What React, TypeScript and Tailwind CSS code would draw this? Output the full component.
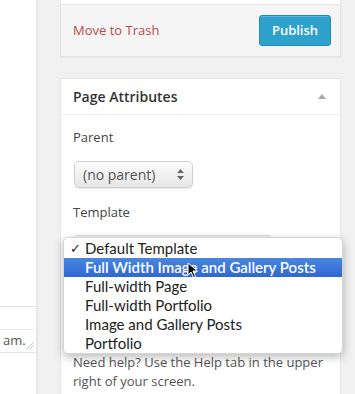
import React from "react";

const items = [
  "Default Template",
  "Full Width Image and Gallery Posts",
  "Full-width Page",
  "Full-width Portfolio",
  "Image and Gallery Posts",
  "Portfolio",
];

export default function App() {
  return (
    <div
      className="relative w-[355px] h-[394px] overflow-hidden flex bg-[#f1f1f1]"
      style={{ fontFamily: '"Open Sans", "Noto Sans", sans-serif' }}
    >
      {/* left column */}
      <div className="w-[38px] shrink-0 bg-white border-r-2 border-[#e6e6e6] flex flex-col">
        <div className="h-[307px] border-b border-[#e2e2e2]" />
        <div className="h-[23px] border-b border-[#eaeaea]" />
        <div className="relative h-[23px] border-b border-[#e2e2e2] flex items-center pl-[3px] text-[13px] text-[#555]">
          am.
          <svg className="absolute right-[2px] bottom-[3px]" width="7" height="7" viewBox="0 0 7 7">
            <path d="M7 0 L0 7 M7 3 L3 7" stroke="#c8c8c8" strokeWidth="1" />
          </svg>
        </div>
      </div>

      {/* main column */}
      <div className="flex-1 pl-[22px] pr-[14px] flex flex-col">
        {/* publish box */}
        <div className="border border-t-0 border-[#e3e3e3] bg-white shadow-[0_1px_1px_rgba(0,0,0,0.04)]">
          <div className="h-[5px] border-b border-[#e6e6e6]" />
          <div className="h-[51px] bg-[#f5f5f5] flex items-center justify-between pl-[12px] pr-[9px]">
            <span className="text-[13px] text-[#b84a4a]">Move to Trash</span>
            <button className="h-[31px] w-[72px] rounded-[3px] bg-[#2ea2cc] border border-[#1e8cbe] text-white text-[13px] font-semibold shadow-[inset_0_1px_0_rgba(120,200,230,0.5)]">
              Publish
            </button>
          </div>
        </div>

        {/* page attributes box */}
        <div className="mt-[21px] flex-1 bg-white border border-b-0 border-[#e5e5e5]">
          <div className="h-[36px] border-b border-[#eeeeee] flex items-center justify-between pl-[12px] pr-[14px]">
            <span className="text-[14px] font-semibold text-[#333]">Page Attributes</span>
            <svg width="8" height="5" viewBox="0 0 8 5">
              <path d="M4 0 L8 5 L0 5 Z" fill="#aaaaaa" />
            </svg>
          </div>
          <div className="pl-[12px] pr-[12px] flex flex-col">
            <p className="mt-[13px] text-[13px] text-[#444] leading-[18px]">Parent</p>
            <div className="mt-[15px] w-[119px] h-[27px] rounded-[5px] border border-[#cfcfcf] bg-gradient-to-b from-[#fdfdfd] to-[#e6e6e6] flex items-center pl-[8px] text-[14px] text-[#555] shadow-[0_1px_1px_rgba(0,0,0,0.08)] ml-[1px]">
              <span className="flex-1">(no parent)</span>
              <svg className="mr-[8px]" width="7" height="11" viewBox="0 0 7 11">
                <path d="M3.5 0 L7 4 L0 4 Z M3.5 11 L7 7 L0 7 Z" fill="#666" />
              </svg>
            </div>
            <p className="mt-[15px] text-[13px] text-[#444] leading-[18px]">Template</p>
            <div className="mt-[14px] h-[26px] w-[200px] rounded-[5px] border border-[#ddd] bg-[#f3f3f3]" />
            <p className="mt-[92px] text-[13px] leading-[19px] text-[#555]">
              Need help? Use the Help tab in the upper right of your screen.
            </p>
          </div>
        </div>
      </div>

      {/* popup menu */}
      <div
        className="absolute left-[63px] top-[237px] w-[280px] h-[117px] bg-white rounded-[5px] shadow-[0_3px_10px_rgba(0,0,0,0.28)] border border-[#d6d6d6] pt-[1px]"
        style={{ fontFamily: '"Lato", "Open Sans", sans-serif' }}
      >
        {items.map((t, i) => (
          <div
            key={t}
            className={
              i === 1
                ? "h-[19px] flex items-center pl-[21px] text-[15px] font-semibold text-white bg-gradient-to-b from-[#4a86e0] to-[#2f67d3] relative"
                : "h-[19px] flex items-center pl-[21px] text-[15px] text-[#222] relative"
            }
          >
            {i === 0 && <span className="absolute left-[6px] text-[13px] text-[#222]">✓</span>}
            {t}
          </div>
        ))}
      </div>

      {/* cursor */}
      <svg className="absolute left-[187px] top-[262px]" width="12" height="17" viewBox="0 0 12 17">
        <path d="M1 1 L1 13 L4 10 L6.5 15.5 L8.5 14.5 L6 9 L10.5 9 Z" fill="#111" stroke="#fff" strokeWidth="1" />
      </svg>
    </div>
  );
}
